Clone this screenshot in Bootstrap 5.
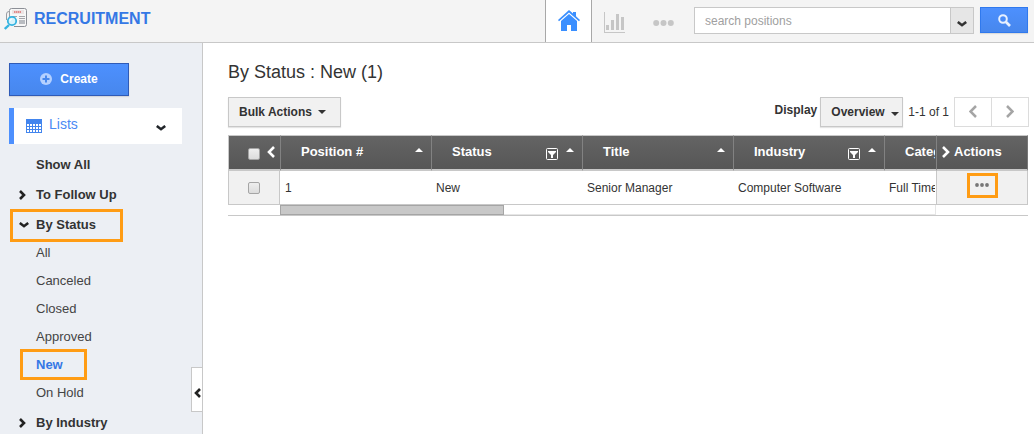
<!DOCTYPE html>
<html lang="en">
<head>
<meta charset="utf-8">
<meta name="viewport" content="width=device-width, initial-scale=1">
<title>Recruitment</title>
<link rel="stylesheet" href="https://cdn.jsdelivr.net/npm/bootstrap@5.3.0/dist/css/bootstrap.min.css">
<style>
  body { font-family: "Liberation Sans", Arial, sans-serif; font-size: 12px; line-height: 16px; color: #333; background: #fff; }
  svg { display: block; flex: none; }
  a { text-decoration: none; }
  .topbar { height: 43px; background: #f4f4f4; border-bottom: 1px solid #c8c8c8; padding: 0 6px 0 4px; }
  .brand-link { gap: 7px; padding-bottom: 3px; }
  .app-name { font-size: 16px; line-height: 20px; color: #3578e5; }
  .home-tab { width: 47px; border: solid #a8a8a8; border-width: 0 1px; background: #fff; }
  .search-form { gap: 6px; padding-top: 7px; }
  .search-group { width: 280px; height: 27px; }
  .search-group .form-control { font-size: 12px; line-height: 16px; padding: 4px 10px; border-color: #c8c8c8; border-radius: 0; min-height: 0; }
  .search-group .form-control::placeholder { color: #a0a0a0; }
  .search-group .btn { width: 25px; padding: 6px 0 0; border: 1px solid #c8c8c8; border-radius: 0; background: #e6e6e6; color: #333; }
  .btn-blue { background: linear-gradient(#4d90fe, #4787ed); border: 1px solid #3079ed; border-radius: 0; color: #fff; box-shadow: 0 1px 1px rgba(0,0,0,.1); padding: 0; }
  .btn-search { width: 48px; height: 26px; }
  .sidebar { width: 203px; background: #eceff4; border-right: 1px solid #c8c8c8; padding: 20px 20px 0 9px; }
  .btn-create { width: 120px; height: 33px; border-color: #2f5bb7; font-size: 12px; font-weight: 700; }
  .lists-head { height: 36px; margin-top: 12px; padding: 0 16px 0 12px; border-left: 5px solid #4d90fe; background: #fff; color: #4a8af4; font-size: 14px; gap: 7px; }
  .lists-head:hover { color: #4a8af4; }
  .side-nav { font-size: 13px; margin-top: 6px; }
  .side-nav .nav-link { padding: 0; height: 30px; color: #333; font-weight: 700; }
  .side-nav .nav-mark { width: 27px; padding-left: 10px; flex: none; color: #222; }
  .side-nav .sub-list { padding: 0; margin: -1px 0 1px 27px; }
  .side-nav .sub-list .nav-link { height: 28px; font-weight: 400; color: #444; }
  .side-nav .sub-list .nav-link.active { font-weight: 700; color: #3578e5; }
  .marked { position: relative; }
  .marked::after { content: ""; position: absolute; border: 3px solid #ff9c14; pointer-events: none; }
  .mark-group::after { left: 1px; top: -1px; width: 113px; height: 33px; }
  .mark-item::after { left: -16px; top: -2px; width: 67px; height: 31px; }
  .side-toggle { position: absolute; right: -1px; bottom: 22px; width: 12px; height: 45px; padding: 6px 0 0 2px; border: 1px solid #c8c8c8; background: #fff; color: #222; }
  .main-pane { padding: 17px 6px 0 25px; }
  .page-title { font-size: 18px; line-height: 24px; font-weight: 400; margin: 0 0 13px; }
  .toolbar { gap: 5px; margin-bottom: 8px; }
  .btn-flat { height: 30px; border: 1px solid #c8c8c8; border-radius: 0; background-color: #f1f1f1; color: #333; font-size: 12px; font-weight: 700; line-height: 16px; padding: 0 10px; box-shadow: 0 1px 1px rgba(0,0,0,.1); }
  .bulk { width: 113px; }
  .overview { width: 83px; appearance: none; background-image: url("data:image/svg+xml,%3Csvg xmlns='http://www.w3.org/2000/svg' width='8' height='4'%3E%3Cpath d='M0 0h8L4 4z' fill='%23333'/%3E%3C/svg%3E"); background-repeat: no-repeat; background-position: right 3px top 14px; }
  .display-box { gap: 3px; }
  .pager .btn { width: 38px; height: 30px; border: 1px solid #dcdcdc; border-radius: 0; background: #fff; padding: 0; color: #a5a5a5; }
  .pager .btn + .btn { margin-left: -1px; }
  .pager { margin-right: -1px; }
  .grid-table { table-layout: fixed; width: 100%; border-collapse: separate; border-spacing: 0; }
  .grid-table th { height: 36px; padding: 0 8px 0 20px; background: linear-gradient(#646464, #565656); color: #fff; font-size: 13px; border: solid #c8c8c8; border-width: 1px 0 2px; overflow: hidden; white-space: nowrap; background-clip: padding-box; }
  .grid-table th + th { border-left: 1px solid #828282; }
  .grid-table td { height: 34px; padding: 1px 0 0 5px; border-bottom: 1px solid #c8c8c8; overflow: hidden; white-space: nowrap; }
  .grid-table .col-check { padding: 0 5px 0 19px; border-left: 1px solid #c8c8c8; }
  .grid-table td.col-check { background: #f1f1f1; border-right: 1px solid #c8c8c8; padding: 1px 0 0 19px; }
  .grid-table th.col-act { padding: 0 0 0 5px; border-right: 1px solid #777; }
  .grid-table td.col-act { background: #f1f1f1; border-left: 1px solid #c8c8c8; border-right: 1px solid #c8c8c8; padding: 0; }
  .clip-end { overflow: hidden; margin-right: 1px; }
  .tick { appearance: none; display: block; width: 12px; height: 12px; margin: 0; border: 1px solid #a5a5a5; border-radius: 2px; background: linear-gradient(#eee, #dcdcdc); }
  .row-menu { width: 31px; height: 25px; border: 3px solid #ff9c14; background: transparent; padding: 0 0 2px; margin: -3px auto 0; color: #777; }
  .scroll-row { border-bottom: 1px solid #c8c8c8; padding: 0 92px 0 52px; }
  .scroll-track { height: 10px; border: solid #e6e6e6; border-width: 0 1px 1px 0; }
  .scroll-thumb { height: 10px; border: 1px solid #a5a5a5; background: #c8c8c8; }
</style>
</head>
<body>
<svg width="0" height="0" class="position-absolute" aria-hidden="true">
  <symbol id="down" viewBox="0 0 10 6"><path d="M.8 1L5 4.200 9.200 1" fill="none" stroke="currentColor" stroke-width="2.600"/></symbol>
  <symbol id="right" viewBox="0 0 7 10"><path d="M1 1l4 4-4 4" fill="none" stroke="currentColor" stroke-width="2.600"/></symbol>
  <symbol id="left" viewBox="0 0 7 10"><path d="M6 1L2 5l4 4" fill="none" stroke="currentColor" stroke-width="2.600"/></symbol>
  <symbol id="sort" viewBox="0 0 8 4"><path d="M0 4h8L4 0z" fill="#fff"/></symbol>
  <symbol id="filter" viewBox="0 0 12 12"><rect x=".5" y=".5" width="11" height="11" rx="1" fill="none" stroke="#fff"/><path d="M2 3h8v1L7 7v3H5V7L2 4z" fill="#fff"/></symbol>
</svg>
<div class="vh-100 d-flex flex-column overflow-hidden">
  <header class="topbar d-flex align-items-stretch">
    <a href="#" class="brand-link d-flex align-items-center">
      <svg width="23" height="23" viewBox="0 0 23 23"><path d="M5.500 2.500q0-2 2-2h13q2 0 2 2v14q0 2-2 2H10" fill="#f7f7f7" stroke="#8c8f96"/><path d="M5 3.500Q2.500 3.500 2.500 6v6M5.500 2.500v8" fill="none" stroke="#9a9da3"/><path d="M8 2h12v4H8z" fill="#ece4e4"/><path d="M10 4h7" stroke="#e08a8a" stroke-width="2" stroke-dasharray="1.500 .5"/><path d="M8 8.500h5M15 8.500h6M15 10.500h6" stroke="#a5a5aa"/><path d="M15 12h6v4h-6z" fill="#b9bcc1"/><circle cx="8" cy="13" r="4.200" fill="#d8f3fb" stroke="#35b3e0" stroke-width="1.800"/><path d="M6 13q0-2 2-2" stroke="#fff" fill="none"/><path d="M5 17l-4.200 4" stroke="#35b3e0" stroke-width="2.400"/></svg>
      <span class="app-name fw-bold">RECRUITMENT</span>
    </a>
    <nav class="ms-auto d-flex align-items-stretch" aria-label="Sections">
      <a href="#" class="home-tab d-flex align-items-center justify-content-center" aria-label="Home">
        <svg width="22" height="22" viewBox="0 0 22 22" fill="#3a8fff"><path d="M11 0l4 3.500V2h3v4.300l4 3.700-1 1.300L11 2.500 1 11.300 0 10z"/><path d="M11 4l8 7v10h-6v-6H9v6H3V11z"/></svg>
      </a>
      <a href="#" class="d-flex align-items-center pt-1 ps-2 ms-1" aria-label="Reports">
        <svg width="21" height="21" viewBox="0 0 21 21" fill="#c6c6c6"><path d="M0 0h1v20h20v1H0zM2 13h3v5H2zM7 8h3v10H7zM12 2h3v16h-3zM17 5h3v13h-3z"/></svg>
      </a>
      <a href="#" class="d-flex align-items-center pt-1 ps-4 ms-1 pe-3 me-1" aria-label="More">
        <svg width="21" height="6" viewBox="0 0 21 6" fill="#c6c6c6"><circle cx="3.200" cy="3" r="3"/><circle cx="10.500" cy="3" r="3"/><circle cx="17.800" cy="3" r="3"/></svg>
      </a>
    </nav>
    <form class="search-form d-flex align-items-start" onsubmit="return false">
      <div class="search-group d-flex">
        <input type="search" class="form-control" placeholder="search positions" aria-label="Search positions">
        <button type="button" class="btn d-flex align-items-center justify-content-center border-start-0" aria-label="Search options"><svg width="10" height="6"><use href="#down"/></svg></button>
      </div>
      <button type="submit" class="btn btn-blue btn-search d-flex align-items-center justify-content-center" aria-label="Search">
        <svg width="13" height="13" viewBox="0 0 13 13"><circle cx="5" cy="5" r="3.800" fill="none" stroke="#e8f1ff" stroke-width="2"/><path d="M8 8l4 4" stroke="#e8f1ff" stroke-width="2.600"/></svg>
      </button>
    </form>
  </header>

  <div class="d-flex flex-grow-1 overflow-hidden">
    <aside class="sidebar flex-shrink-0 position-relative">
      <button type="button" class="btn btn-blue btn-create d-flex align-items-center justify-content-center gap-2">
        <svg width="12" height="12" viewBox="0 0 12 12"><circle cx="6" cy="6" r="6" fill="#b4d0ff"/><path d="M6 2.500v7M2.500 6h7" stroke="#4787ed" stroke-width="2"/></svg>Create
      </button>
      <a href="#" class="lists-head d-flex align-items-center">
        <svg width="16" height="14" viewBox="0 0 16 14"><path d="M0 0h16v14H0z" fill="#4285ee"/><path d="M1 5h2v2H1zM4 5h2v2H4zM7 5h2v2H7zM10 5h2v2h-2zM13 5h2v2h-2zM1 8h2v2H1zM4 8h2v2H4zM7 8h2v2H7zM10 8h2v2h-2zM13 8h2v2h-2zM1 11h2v2H1zM4 11h2v2H4zM7 11h2v2H7zM10 11h2v2h-2zM13 11h2v2h-2z" fill="#fff"/></svg>
        <span class="flex-grow-1 pb-1">Lists</span>
        <svg width="10" height="6" class="text-dark mt-1"><use href="#down"/></svg>
      </a>
      <nav class="side-nav" aria-label="Lists">
        <a href="#" class="nav-link d-flex align-items-center"><span class="nav-mark"></span>Show All</a>
        <a href="#" class="nav-link d-flex align-items-center"><span class="nav-mark"><svg width="7" height="10"><use href="#right"/></svg></span>To Follow Up</a>
        <a href="#" class="nav-link d-flex align-items-center marked mark-group"><span class="nav-mark"><svg width="10" height="6"><use href="#down"/></svg></span>By Status</a>
        <ul class="sub-list list-unstyled">
          <li><a href="#" class="nav-link d-flex align-items-center">All</a></li>
          <li><a href="#" class="nav-link d-flex align-items-center">Canceled</a></li>
          <li><a href="#" class="nav-link d-flex align-items-center">Closed</a></li>
          <li><a href="#" class="nav-link d-flex align-items-center">Approved</a></li>
          <li><a href="#" class="nav-link d-flex align-items-center active marked mark-item">New</a></li>
          <li><a href="#" class="nav-link d-flex align-items-center">On Hold</a></li>
        </ul>
        <a href="#" class="nav-link d-flex align-items-center"><span class="nav-mark"><svg width="7" height="10"><use href="#right"/></svg></span>By Industry</a>
      </nav>
      <button type="button" class="side-toggle d-flex align-items-center" aria-label="Collapse sidebar"><svg width="7" height="10"><use href="#left"/></svg></button>
    </aside>

    <main class="main-pane flex-grow-1 overflow-auto">
      <h1 class="page-title">By Status : New (1)</h1>
      <div class="toolbar d-flex align-items-center">
        <button type="button" class="btn btn-flat bulk d-flex align-items-center justify-content-between">Bulk Actions
          <svg width="8" height="4" viewBox="0 0 8 4" class="me-1"><path d="M0 0h8L4 4z" fill="#333"/></svg></button>
        <div class="display-box d-flex align-items-center ms-auto">
          <label for="view" class="fw-bold pb-1">Display</label>
          <select id="view" class="btn-flat overview"><option>Overview</option></select>
        </div>
        <span>1-1 of 1</span>
        <div class="pager d-flex">
          <button type="button" class="btn d-flex align-items-center justify-content-center" aria-label="Previous page"><svg width="8" height="13" viewBox="0 0 8 13"><path d="M7 1L1.500 6.500 7 12" fill="none" stroke="currentColor" stroke-width="2.500"/></svg></button>
          <button type="button" class="btn d-flex align-items-center justify-content-center" aria-label="Next page"><svg width="8" height="13" viewBox="0 0 8 13"><path d="M1 1l5.500 5.500L1 12" fill="none" stroke="currentColor" stroke-width="2.500"/></svg></button>
        </div>
      </div>
      <table class="grid-table">
        <colgroup><col style="width:52px"><col style="width:151px"><col style="width:151px"><col style="width:151px"><col style="width:151px"><col><col style="width:92px"></colgroup>
        <thead>
          <tr>
            <th class="col-check" scope="col"><div class="d-flex align-items-center justify-content-between"><input type="checkbox" class="tick mt-1" aria-label="Select all"><svg width="8" height="12" viewBox="0 0 8 12"><path d="M7 1L2 6l5 5" fill="none" stroke="#fff" stroke-width="2.600"/></svg></div></th>
            <th scope="col"><div class="d-flex align-items-center"><span class="flex-grow-1">Position #</span><svg width="8" height="4" class="mb-1"><use href="#sort"/></svg></div></th>
            <th scope="col"><div class="d-flex align-items-center"><span class="flex-grow-1">Status</span><svg width="12" height="12" class="me-2 mt-1"><use href="#filter"/></svg><svg width="8" height="4" class="mb-1"><use href="#sort"/></svg></div></th>
            <th scope="col"><div class="d-flex align-items-center"><span class="flex-grow-1">Title</span><svg width="8" height="4" class="mb-1"><use href="#sort"/></svg></div></th>
            <th scope="col"><div class="d-flex align-items-center"><span class="flex-grow-1">Industry</span><svg width="12" height="12" class="me-2 mt-1"><use href="#filter"/></svg><svg width="8" height="4" class="mb-1"><use href="#sort"/></svg></div></th>
            <th scope="col" class="pe-0"><div class="clip-end">Category</div></th>
            <th scope="col" class="col-act"><div class="d-flex align-items-center"><svg width="8" height="12" viewBox="0 0 8 12" class="me-1"><path d="M1 1l5 5-5 5" fill="none" stroke="#fff" stroke-width="2.600"/></svg><span>Actions</span></div></th>
          </tr>
        </thead>
        <tbody>
          <tr>
            <td class="col-check"><input type="checkbox" class="tick" aria-label="Select position 1"></td>
            <td>1</td><td>New</td><td>Senior Manager</td><td>Computer Software</td>
            <td><div class="clip-end">Full Time</div></td>
            <td class="col-act"><button type="button" class="row-menu d-flex align-items-center justify-content-center" aria-label="Row actions"><svg width="14" height="4" viewBox="0 0 14 4" fill="currentColor"><circle cx="2" cy="2" r="1.900"/><circle cx="7" cy="2" r="1.900"/><circle cx="12" cy="2" r="1.900"/></svg></button></td>
          </tr>
        </tbody>
      </table>
      <div class="scroll-row"><div class="scroll-track"><div class="scroll-thumb" style="width:34.2%"></div></div></div>
    </main>
  </div>
</div>
<script src="https://cdn.jsdelivr.net/npm/bootstrap@5.3.0/dist/js/bootstrap.bundle.min.js"></script>
</body>
</html>
